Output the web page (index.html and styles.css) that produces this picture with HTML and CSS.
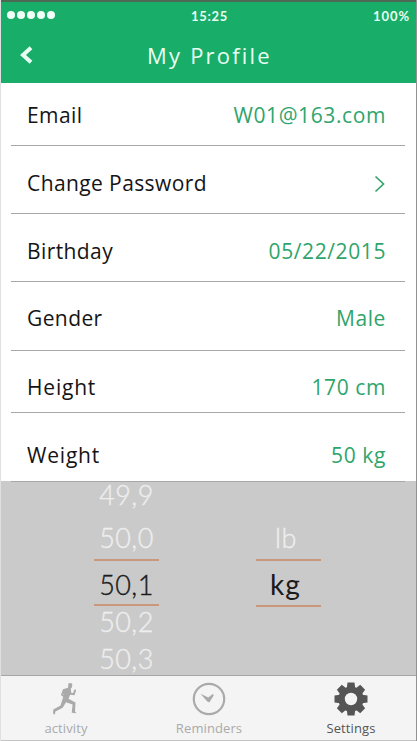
FILE: index.html
```html
<!DOCTYPE html>
<html lang="en">
<head>
<meta charset="utf-8">
<title>My Profile</title>
<link rel="stylesheet" href="styles.css">
</head>
<body>
<div class="app">
  <header class="header">
    <div class="status">
      <span class="signal"><i></i><i></i><i></i><i></i><i></i></span>
      <span class="time">15:25</span>
      <span class="battery">100%</span>
    </div>
    <div class="titlebar">
      <svg class="back" width="14" height="18" viewBox="0 0 14 18"><path d="M12 1.800 4 9l8 7.200" fill="none" stroke="#e9fff3" stroke-width="4"/></svg>
      <h1 class="title">My Profile</h1>
    </div>
  </header>
  <main class="list">
    <div class="row row-email"><span class="label">Email</span><span class="value">W01@163.com</span></div>
    <div class="row row-password"><span class="label">Change Password</span><svg class="chevron" width="12" height="18" viewBox="0 0 12 18"><path d="M1.500 1.500 9.500 9l-8 7.500" fill="none" stroke="#2fa56c" stroke-width="1.700"/></svg></div>
    <div class="row row-birthday"><span class="label">Birthday</span><span class="value">05/22/2015</span></div>
    <div class="row row-gender"><span class="label">Gender</span><span class="value">Male</span></div>
    <div class="row row-height"><span class="label">Height</span><span class="value">170 cm</span></div>
    <div class="row row-weight"><span class="label">Weight</span><span class="value">50 kg</span></div>
  </main>
  <section class="picker">
    <div class="wheel amount">
      <span class="first">49,9</span>
      <span class="second">50,0</span>
      <span class="selected">50,1</span>
      <span class="fourth">50,2</span>
      <span class="fifth">50,3</span>
    </div>
    <div class="wheel unit">
      <span class="first"></span>
      <span class="second">lb</span>
      <span class="selected">kg</span>
    </div>
  </section>
  <nav class="tabs">
    <a class="tab activity">
      <svg width="34" height="34" viewBox="0 0 34 34"><path fill="#aaa" d="M18.300 1.500Q20.500.2 22.300 1.700L22 5.200 20.800 6.500 21.200 10.800 23 11.300 24.500 7.300 26.200 8 24.500 13.200 20.200 12.800 18.500 16.800 25.500 20.500 25 29.500 26.500 31.300 21.700 30.800 22.600 22.500 16 20.200 12.700 25.700 5.500 29.500 4.700 32.800 3 31.500 3.300 27.500 10.500 23.600 13.300 14.700 14.200 11 13.300 12.900 16 15.200 14.800 16.300 10.900 12.900 13 7.200 18.100 5.700Z"/></svg>
      <span>activity</span>
    </a>
    <a class="tab reminders">
      <svg width="34" height="34" viewBox="0 0 34 34"><circle cx="17" cy="17" r="15.200" fill="none" stroke="#aaa" stroke-width="2.200"/><path d="M8.500 11.800 16.300 15.600 20.700 12 21.800 13.200 17.300 20.500 15 19.300Z" fill="#aaa"/></svg>
      <span>Reminders</span>
    </a>
    <a class="tab settings">
      <svg width="34" height="34" viewBox="-17 -17 34 34"><g fill="#555"><circle r="12.600"/><g id="teeth"><path id="tooth" d="M-4.200-11-3.500-16.500H3.500L4.200-11V11L3.500 16.500H-3.500L-4.200 11Z"/><use href="#tooth" transform="rotate(45)"/></g><use href="#teeth" transform="rotate(90)"/></g><circle r="6.200" fill="#f4f4f4"/></svg>
      <span>Settings</span>
    </a>
  </nav>
</div>
</body>
</html>
```
FILE: styles.css
```css
* { box-sizing: border-box; }
body { margin: 0; background: #fff; font-family: "Open Sans", sans-serif; }
.app {
  display: grid;
  grid-template-columns: minmax(0, 1fr);
  grid-template-rows: 83px 398px 194px 66px;
  width: 417px;
  height: 741px;
  border-right: 1px solid #929292;
  border-left: 1px solid #e0e0e0;
  overflow: hidden;
}
.header {
  margin-left: -1px;
  background: #18ad68;
  border-top: 2px solid #4b6953;
  color: #e9fff3;
}
.status {
  display: grid;
  grid-template-columns: 1fr 1fr 1fr;
  align-items: center;
  height: 27px;
  padding: 0 6px 0 7px;
  font: 700 13px/20px Lato, sans-serif;
}
.signal { display: flex; gap: 2px; margin-top: -2px; }
.signal i { width: 8px; height: 8px; border-radius: 50%; background: #f0fff7; }
.time { text-align: center; letter-spacing: .7px; padding-left: 2px; }
.battery { text-align: right; letter-spacing: .9px; }
.titlebar {
  display: grid;
  grid-template-columns: 60px 1fr 60px;
  align-items: center;
  height: 52px;
}
.back { margin-left: 19px; }
.title { margin: 0; font-size: 22px; font-weight: 400; line-height: 30px; letter-spacing: 2.2px; text-align: center; padding-left: 3px; }
.list {
  display: grid;
  grid-template-rows: 63px 68px 68px 69px 62px 69px;
  padding: 0 11px 0 10px;
  position: relative;
  z-index: 1;
}
.row {
  display: flex;
  justify-content: space-between;
  align-items: flex-start;
  border-bottom: 1px solid #a8a8a8;
  padding: 23px 19px 0 16px;
  font-size: 21px;
  line-height: 28px;
  color: #151515;
}
.row-email { padding-top: 18px; }
.row-gender, .row-height { padding-top: 22px; }
.row-weight { padding-top: 28px; }
.label { letter-spacing: .4px; }
.value { color: #2fa56c; letter-spacing: .6px; }
.row-height .label, .row-weight .label { letter-spacing: .8px; }
.chevron { margin-top: 6px; }
.picker {
  display: flex;
  justify-content: center;
  gap: 97px;
  background: #cacaca;
  margin-left: -1px;
  padding-right: 2px;
  font: 300 27px/32px Lato, sans-serif;
  color: #eee;
  -webkit-text-stroke: .35px currentColor;
}
.wheel { display: flex; flex-direction: column; width: 65px; text-align: center; }
.first { height: 32px; margin-top: -2px; }
.second { height: 48px; padding-top: 11px; }
.unit .second { padding-right: 4px; letter-spacing: .7px; }
.selected {
  height: 48px;
  padding-top: 8px;
  border-top: 2px solid #c9977b;
  border-bottom: 2px solid #c9977b;
  color: #1b1b1b;
}
.amount span { letter-spacing: .4px; padding-left: 1px; }
.unit .selected { font-size: 28px; font-weight: 400; letter-spacing: 1px; padding: 7px 5px 0 0; -webkit-text-stroke: 0; }
.fourth { height: 37px; }
.fifth { height: 32px; }
.tabs {
  display: grid;
  grid-template-columns: 132px 154px 130px;
  margin-left: -1px;
  background: #f4f4f4;
  border-top: 1px solid #a6a6a6;
  border-bottom: 1px solid #c4c4c4;
}
.tab { display: flex; flex-direction: column; align-items: center; padding-top: 6px; font-size: 13px; line-height: 18px; color: #aaa; }
.activity svg { margin-left: 2px; }
.tab span { margin-top: 3px; letter-spacing: .1px; }
.settings { color: #555; }
```
